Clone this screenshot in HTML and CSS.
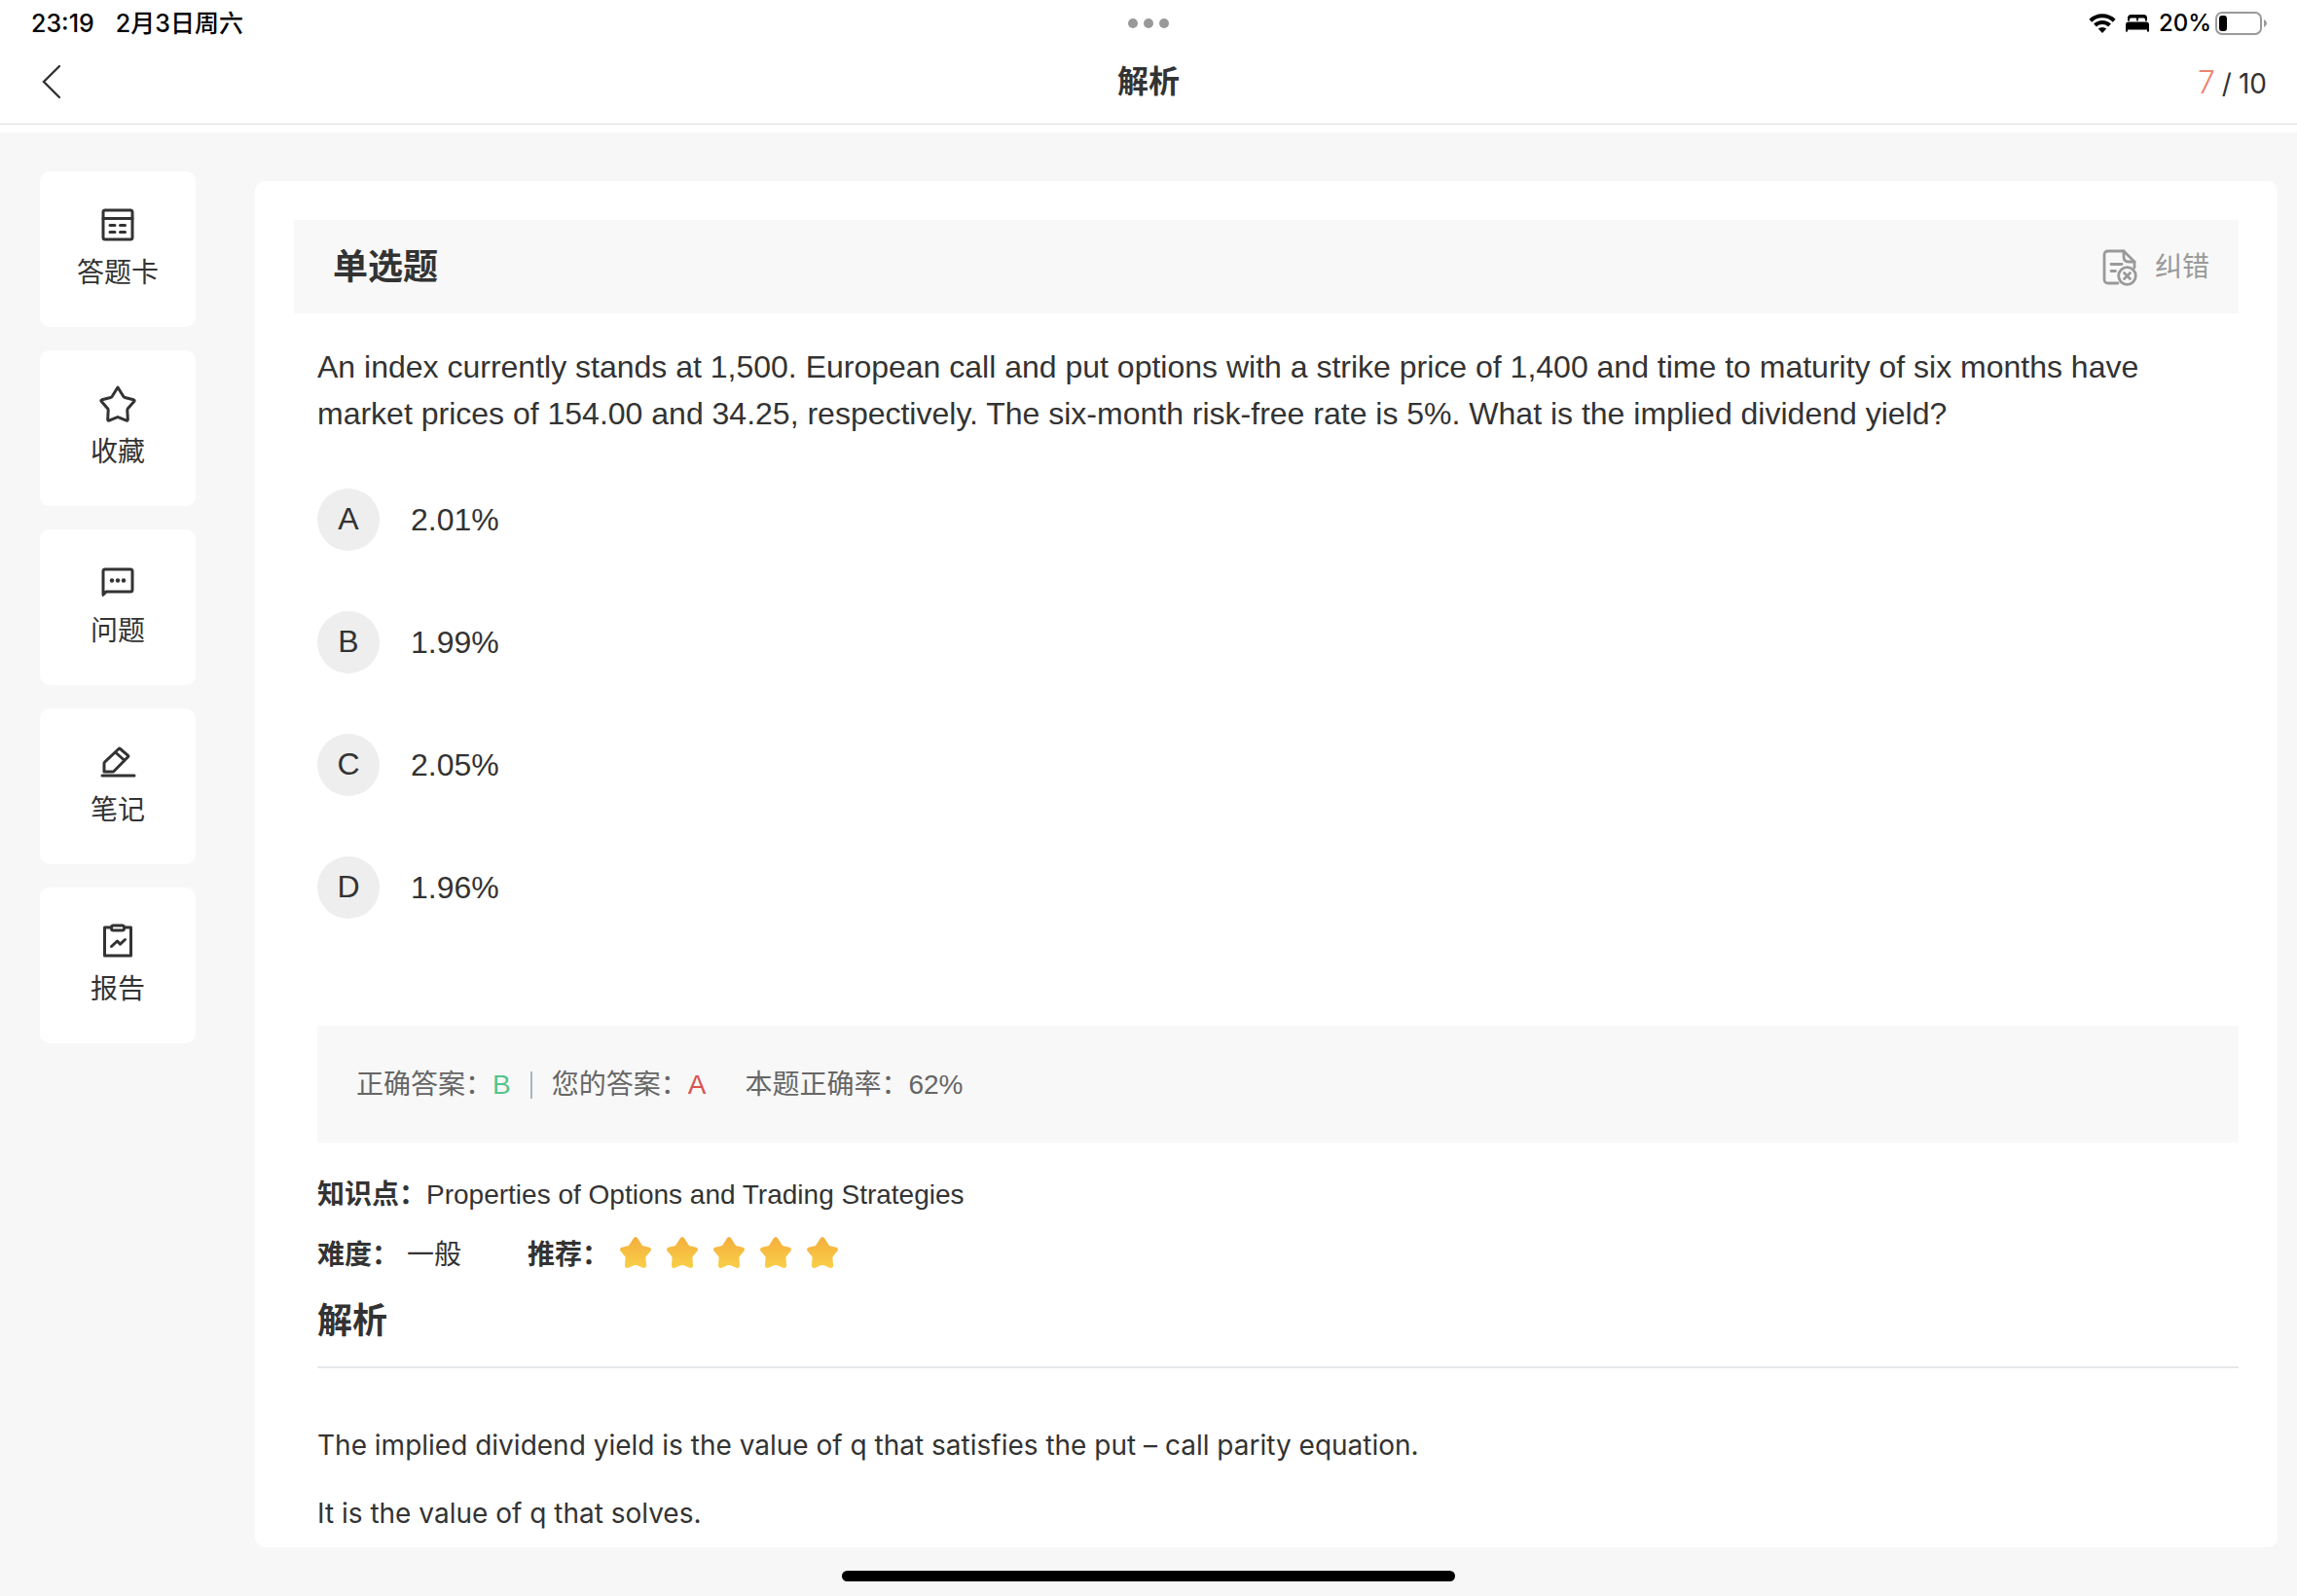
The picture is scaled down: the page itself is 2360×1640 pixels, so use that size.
FILE: index.html
```html
<!DOCTYPE html>
<html lang="zh-CN">
<head>
<meta charset="utf-8">
<meta name="viewport" content="width=device-width, initial-scale=1">
<title>解析</title>
<link rel="stylesheet" href="styles.css">
</head>
<body>
<div class="app">
  <div class="status">
    <div class="status-side status-left"><span>23:19</span><span>2月3日周六</span></div>
    <div class="dots"><i></i><i></i><i></i></div>
    <div class="status-side status-right">
      <svg width="28" height="20" viewBox="0 0 28 20" fill="none" stroke="#000" stroke-width="4"><path d="M1.800 7.200a17.500 17.500 0 0 1 24.400 0"/><path d="M6.500 12a10.800 10.800 0 0 1 15 0"/><path d="M9.800 15.600a6.200 6.200 0 0 1 8.400 0L14 20z" fill="#000" stroke="none"/></svg>
      <svg width="24" height="18" viewBox="0 0 24 18"><path d="M2 6.500V3.500A3.500 3.500 0 0 1 5.500 0h13A3.500 3.500 0 0 1 22 3.500v3h-2V5a1.500 1.500 0 0 0-1.500-1.500H14A1.200 1.200 0 0 0 12.800 4.700V6.500h-1.600V4.700A1.200 1.200 0 0 0 10 3.500H5.500A1.500 1.500 0 0 0 4 5v1.500zM0 17v-6.500A3 3 0 0 1 3 7.500h18a3 3 0 0 1 3 3V17q0 .8-1 .8t-1-.8v-1.500H2V17q0 .8-1 .8T0 17z"/></svg>
      <span class="battery"><span>20%</span>
      <svg width="54" height="24" viewBox="0 0 54 24"><rect x="1" y="1" width="46" height="22" rx="6" fill="none" stroke="#9a9a9a" stroke-width="2"/><rect x="4" y="4" width="8" height="16" rx="3"/><path d="M50 8q3 1.500 3 4t-3 4z" fill="#9a9a9a"/></svg></span>
    </div>
  </div>
  <header class="topbar">
    <button class="back" aria-label="返回"><svg width="20" height="36" viewBox="0 0 20 36" fill="none" stroke="#333" stroke-width="2.400" stroke-linecap="round"><path d="M18 2 2 18l16 16"/></svg></button>
    <h1>解析</h1>
    <div class="progress"><span class="current">7</span><span>/</span><span>10</span></div>
  </header>
  <main class="body">
    <nav class="tools">
      <button class="tool"><svg viewBox="0 0 40 40"><rect x="5" y="5" width="30" height="30" rx="2"/><path d="M5 13.500h30M12 20.500h5M22.500 20.500h5M12 27.500h5M22.500 27.500h5"/></svg>答题卡</button>
      <button class="tool"><svg viewBox="0 0 40 40"><path d="m20 3 5.900 9.500q.5.800 1.400 1L36.300 15.800q1.500.5.500 1.700l-6.400 7.300q-.6.700-.6 1.600l.5 9.700q0 1.500-1.400 1l-8-3.300q-.9-.4-1.800 0l-8 3.300q-1.400.5-1.400-1l.5-9.700q0-.9-.6-1.600L3.200 17.500q-1-1.200.5-1.700l9-2.300q.9-.2 1.400-1L20 3z"/></svg>收藏</button>
      <button class="tool"><svg viewBox="0 0 40 40"><path d="M5 32V8q0-2 2-2h26q2 0 2 2v19q0 2-2 2H8z"/><path d="M4 28v6.500L10 29z" fill="#333" stroke="none"/><g fill="#333" stroke="none"><circle cx="14" cy="17.500" r="2.200"/><circle cx="20" cy="17.500" r="2.200"/><circle cx="26" cy="17.500" r="2.200"/></g></svg>问题</button>
      <button class="tool"><svg viewBox="0 0 40 40"><path d="M4 34h33M6 30v-8.500q0-1 .8-1.700L21 6.500q.8-.7 1.500 0l8 6.800q.8.700 0 1.500L16.500 29q-.9 1-2 1zM17.500 10 27 18.500"/></svg>笔记</button>
      <button class="tool"><svg viewBox="0 0 40 40"><path d="M13.500 6H6.500v29h27V6h-7"/><rect x="13.500" y="4" width="13" height="5" rx="2"/><path d="m13.500 25.500 6-5.500 3 3.200 5-4.700"/></svg>报告</button>
    </nav>
    <article class="card">
      <header class="band">
        <h2>单选题</h2>
        <button class="report"><svg width="36" height="38" viewBox="0 0 36 38" fill="none" stroke="#999" stroke-width="2.800" stroke-linecap="round" stroke-linejoin="round"><path d="M16 35H6q-4 0-4-4V6q0-4 4-4h16L33 13v6"/><path d="M22 2v6q0 5 5 5h6"/><path d="M9 15.500h11M9 22.500h4.500"/><circle cx="25.500" cy="27.500" r="8.800"/><path d="m22.500 24.500 6 6m0-6-6 6"/></svg>纠错</button>
      </header>
      <div class="content">
        <p class="question">An index currently stands at 1,500. European call and put options with a strike price of 1,400 and time to maturity of six months have market prices of 154.00 and 34.25, respectively. The six-month risk-free rate is 5%. What is the implied dividend yield?</p>
        <div class="options">
          <button class="option"><span class="letter">A</span>2.01%</button>
          <button class="option"><span class="letter">B</span>1.99%</button>
          <button class="option"><span class="letter">C</span>2.05%</button>
          <button class="option"><span class="letter">D</span>1.96%</button>
        </div>
        <div class="answers">
          <span>正确答案：<b class="right">B</b></span><i class="rule"></i><span>您的答案：<b class="wrong">A</b></span><span class="rate">本题正确率：62%</span>
        </div>
        <p class="meta"><strong>知识点：</strong>Properties of Options and Trading Strategies</p>
        <div class="meta rating">
          <strong>难度：</strong><span class="level">一般</span><strong>推荐：</strong>
          <svg class="stars" width="224" height="32" viewBox="0 0 224 32" role="img" aria-label="5">
            <defs>
              <linearGradient id="gold" x1="0" y1="0" x2="0" y2="1"><stop offset="0" stop-color="#f4ae3d"/><stop offset="1" stop-color="#f9cf48"/></linearGradient>
              <path id="star" fill="url(#gold)" d="M13.800 1.500q2.200-3 4.400 0l4.300 6.800q.5.800 1.400 1l6.300 1.400q3 1.200 1.200 3.700l-4.500 5.600q-.6.800-.5 1.800l.7 7.400q-.2 3.200-3.200 2.700l-6.800-2.800q-1.100-.4-2.200 0l-6.800 2.800q-3 .5-3.200-2.700l.7-7.400q.1-1-.5-1.800L.6 14.400q-1.800-2.500 1.200-3.700l6.300-1.400q.9-.2 1.400-1z"/>
            </defs>
            <use href="#star"/><use href="#star" x="48"/><use href="#star" x="96"/><use href="#star" x="144"/><use href="#star" x="192"/>
          </svg>
        </div>
        <h2 class="section">解析</h2>
        <div class="explain">
          <p>The implied dividend yield is the value of q that satisfies the put – call parity equation.</p>
          <p>It is the value of q that solves.</p>
        </div>
      </div>
    </article>
  </main>
  <footer class="home"><i></i></footer>
</div>
</body>
</html>
```
FILE: styles.css
```css
* { box-sizing: border-box; }
body, h1, h2, p { margin: 0; }
body {
  font-family: "Liberation Sans", "Noto Sans CJK SC", sans-serif;
  font-size: 28px;
  line-height: 40px;
  color: #333;
  background: #f7f7f7;
}
button { padding: 0; border: 0; background: none; font: inherit; color: inherit; cursor: pointer; }
svg { display: block; flex: none; }
b { font-weight: 400; }

.app { min-height: 100vh; display: flex; flex-direction: column; }

.status, .topbar { display: grid; grid-template-columns: 1fr auto 1fr; align-items: center; background: #fff; }
.status {
  height: 48px;
  padding: 0 30px;
  font-family: Inter, "Noto Sans CJK SC", sans-serif;
  font-size: 24px;
  font-weight: 500;
  color: #000;
}
.status-side { display: flex; align-items: center; }
.status-left { gap: 22px; padding-left: 2px; font-size: 25px; }
.status-right { justify-content: flex-end; gap: 10px; }
.battery { display: flex; align-items: center; gap: 4px; }
.dots { display: flex; gap: 6px; }
.dots i { width: 10px; height: 10px; border-radius: 50%; background: #999; }

.topbar { height: 80px; padding: 0 31px 8px; border-bottom: 1px solid #dcdcdc; }
.topbar h1 { font-size: 32px; font-weight: 700; line-height: 40px; }
.back { justify-self: start; padding-left: 12px; }
.progress { display: flex; justify-content: flex-end; align-items: baseline; gap: 7px; padding-top: 4px; font-family: Inter, sans-serif; }
.current { font-size: 32px; font-weight: 300; color: #e98570; }

.body {
  flex: 1;
  display: flex;
  align-items: stretch;
  gap: 61px;
  padding: 40px 20px 0 41px;
  border-top: 8px solid #fff;
}
.tools { display: flex; flex-direction: column; gap: 24px; }
.tool {
  display: flex;
  flex-direction: column;
  align-items: center;
  justify-content: center;
  gap: 10px;
  width: 160px;
  height: 160px;
  border-radius: 10px;
  background: #fff;
}
.tool svg { width: 40px; height: 40px; fill: none; stroke: #333; stroke-width: 3; stroke-linecap: round; stroke-linejoin: round; }

.card { flex: 1; min-width: 0; margin-top: 10px; padding: 40px 40px 0; border-radius: 10px; background: #fff; }
.band { display: flex; align-items: center; justify-content: space-between; height: 96px; padding: 2px 30px 0 40px; background: #f8f8f8; }
.band h2, .section { font-size: 36px; font-weight: 700; line-height: 48px; }
.report { display: flex; align-items: center; gap: 18px; color: #999; }

.content { padding-left: 24px; }
.question { padding: 31px 40px 0 0; font-size: 32px; line-height: 48px; }
.options { display: flex; flex-direction: column; align-items: flex-start; gap: 62px; padding: 53px 0 110px; }
.option { display: flex; align-items: center; gap: 32px; font-size: 32px; }
.letter { width: 64px; height: 64px; border-radius: 50%; background: #eee; line-height: 62px; }

.answers { display: flex; align-items: center; gap: 20px; height: 120px; padding: 2px 40px 0; background: #f8f8f8; color: #666; }
.rule { width: 2px; height: 28px; background: #abb4c0; }
.right { color: #55c489; }
.wrong { color: #d9534f; }
.rate { margin-left: 20px; }

.meta { margin-top: 34px; }
.meta strong { font-weight: 700; }
.rating { display: flex; align-items: center; margin-top: 22px; }
.level { margin: 0 68px 0 8px; }
.stars { margin: 0 0 6px 11px; }
.section { margin-top: 24px; padding-bottom: 22px; border-bottom: 2px solid #e6e8eb; }
.explain { padding-top: 44px; font-family: Inter, sans-serif; line-height: 70px; }

.home { height: 50px; display: flex; justify-content: center; padding-top: 24px; }
.home i { width: 630px; height: 11px; border-radius: 6px; background: #000; }
```
